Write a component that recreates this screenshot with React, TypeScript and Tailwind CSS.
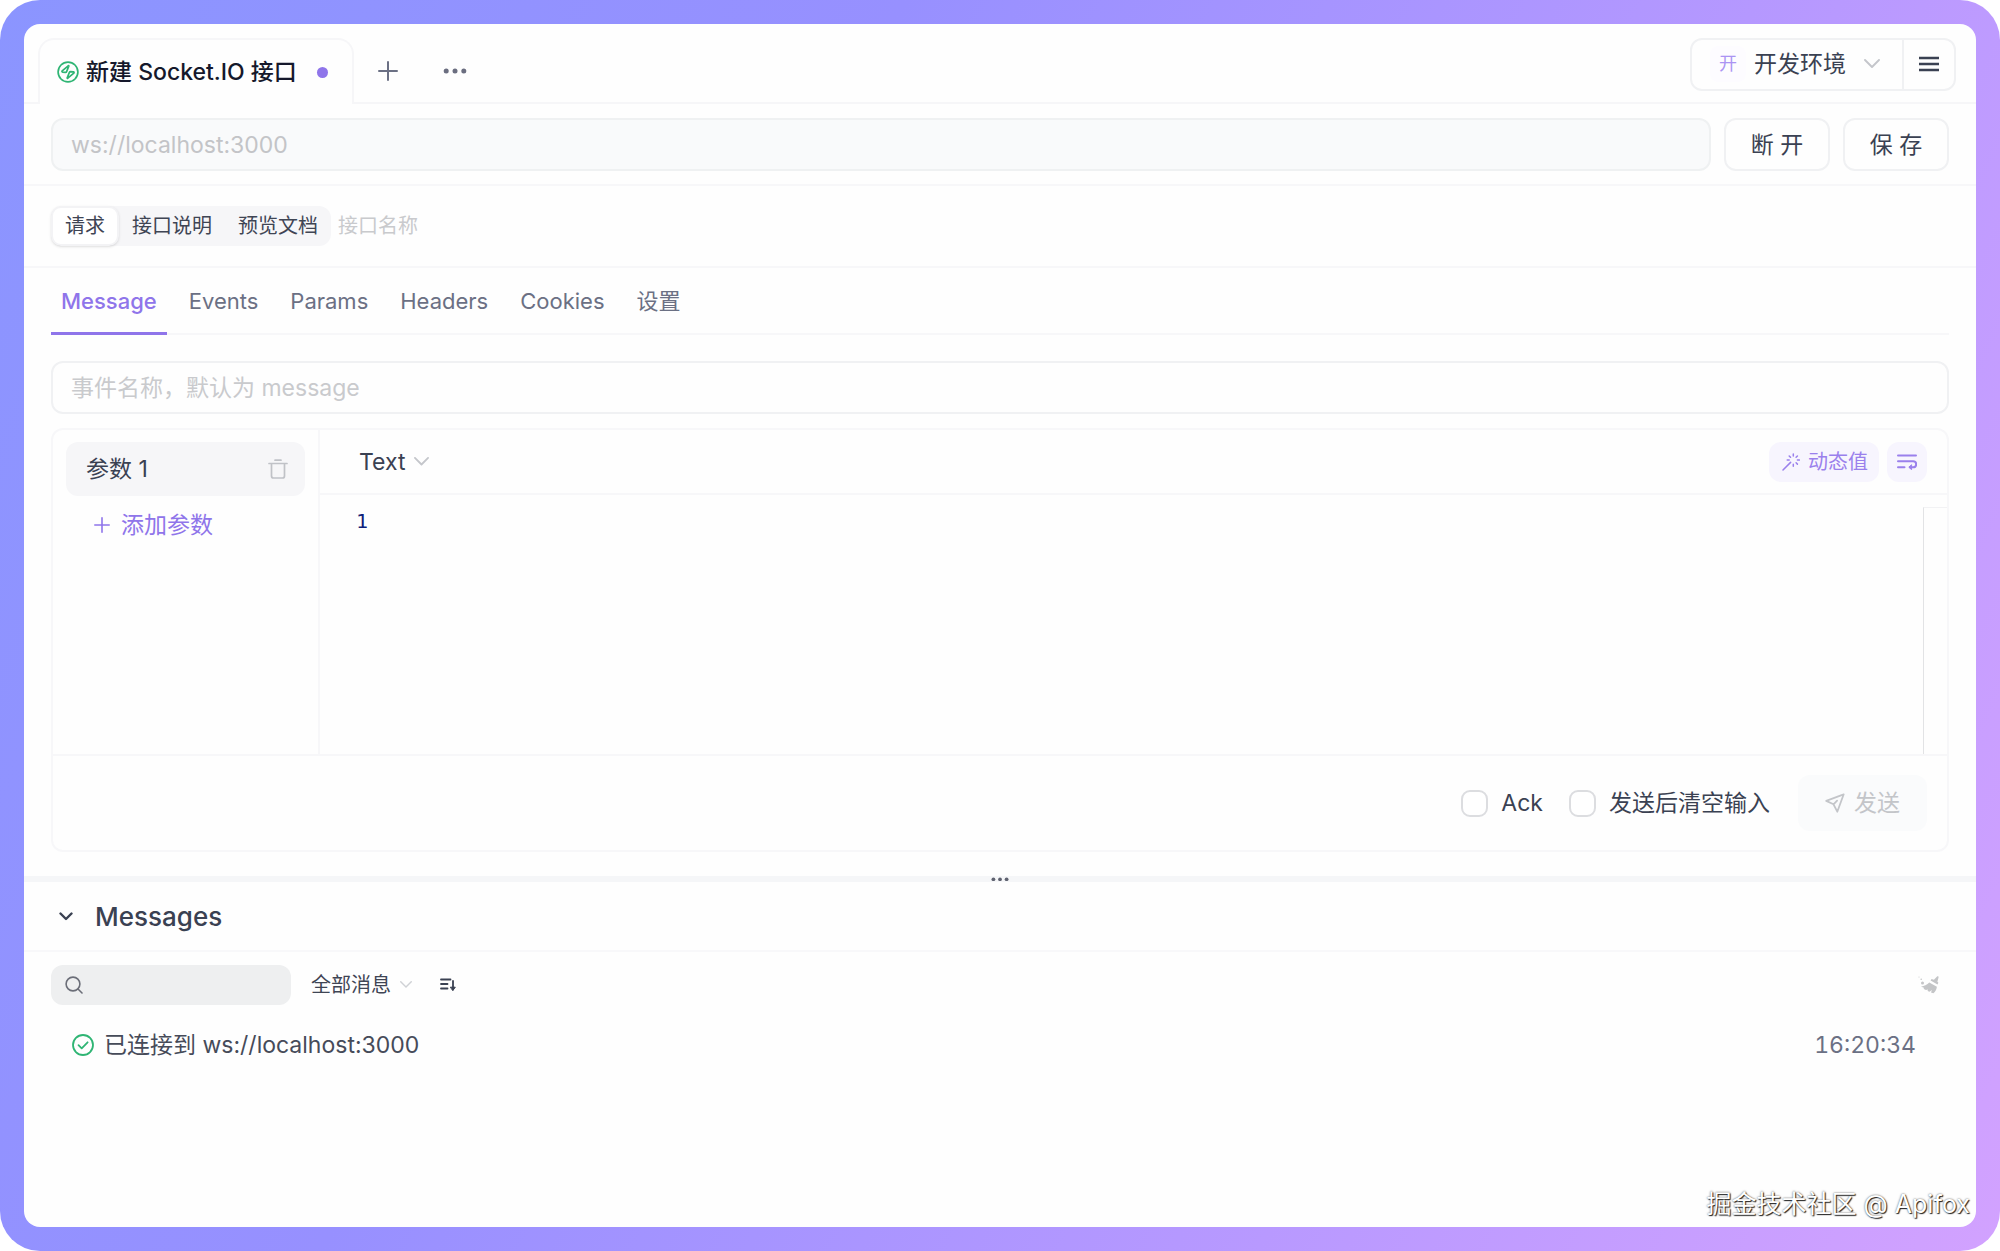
import React from 'react';

type IconProps = { className?: string };

const stroke = {
  fill: 'none',
  stroke: 'currentColor',
  strokeLinecap: 'round' as const,
  strokeLinejoin: 'round' as const,
};

const SocketIcon = ({ className }: IconProps) => (
  <svg viewBox="0 0 22 22" className={className} {...stroke} strokeWidth="1.7">
    <circle cx="11" cy="11" r="9.9" />
    <path d="M11.200 4.800 5.200 9.800c-.5.500-.3 1.200.4 1.300l2.900.2c.5 0 .9-.2 1.100-.7l2.200-5.400c.1-.4-.2-.7-.6-.4Z" />
    <path d="m10.800 17.200 6-5c.5-.5.300-1.200-.4-1.300l-2.900-.2c-.5 0-.9.200-1.100.7l-2.200 5.400c-.1.400.2.700.6.400Z" />
  </svg>
);

const PlusIcon = ({ className }: IconProps) => (
  <svg viewBox="0 0 20 20" className={className} {...stroke} strokeWidth="2">
    <path d="M10 1v18M1 10h18" />
  </svg>
);

const DotsIcon = ({ className }: IconProps) => (
  <svg viewBox="0 0 24 6" className={className} fill="currentColor">
    <circle cx="3.2" cy="3" r="2.5" />
    <circle cx="12" cy="3" r="2.5" />
    <circle cx="20.8" cy="3" r="2.5" />
  </svg>
);

const ChevronIcon = ({ className }: IconProps) => (
  <svg viewBox="0 0 16 10" className={className} {...stroke} strokeWidth="1.9">
    <path d="m1 1 7 7 7-7" />
  </svg>
);

const BoldChevronIcon = ({ className }: IconProps) => (
  <svg viewBox="0 0 14 9" className={className} {...stroke} strokeWidth="2.4">
    <path d="m1.5 1.5 5.5 5.5 5.5-5.5" />
  </svg>
);

const MenuIcon = ({ className }: IconProps) => (
  <svg viewBox="0 0 20 16" className={className} {...stroke} strokeLinecap="butt" strokeWidth="2.4">
    <path d="M0 2h20M0 8h20M0 14h20" />
  </svg>
);

const TrashIcon = ({ className }: IconProps) => (
  <svg viewBox="0 0 20 20" className={className} {...stroke} strokeWidth="1.7">
    <path d="M1 4.500h18M7 1.200h6M3.500 4.500v12.500c0 1.200.8 2 2 2h9c1.200 0 2-.8 2-2V4.500" />
  </svg>
);

const WandIcon = ({ className }: IconProps) => (
  <svg viewBox="0 0 18 18" className={className} {...stroke} strokeWidth="1.5">
    <path d="M1 17 8.600 9.400M11.300 1v2M11.300 11.200v2M5.200 7h2M15.400 7h2M7.200 3l1.300 1.300M15.400 3l-1.300 1.300M15.400 11.100l-1.300-1.300" />
  </svg>
);

const WrapIcon = ({ className }: IconProps) => (
  <svg viewBox="0 0 20 16" className={className} {...stroke} strokeWidth="2">
    <path d="M1 1.500h18M1 7.300h15.200a2.900 2.900 0 0 1 0 5.900H13M1 13.200h6.500" />
    <path d="m14.300 11-2.500 2.200 2.500 2.200Z" fill="currentColor" strokeWidth="1" />
  </svg>
);

const SendIcon = ({ className }: IconProps) => (
  <svg viewBox="0 0 20 20" className={className} {...stroke} strokeWidth="1.800">
    <path d="M18.700 1.300 1.200 7.900l7.300 3.400 3.800 7.400 6.400-17.400ZM8.500 11.300l3.600-3.600" />
  </svg>
);

const SearchIcon = ({ className }: IconProps) => (
  <svg viewBox="0 0 18 18" className={className} {...stroke} strokeWidth="1.600">
    <circle cx="8" cy="8" r="6.900" />
    <path d="m13 13 4 4" />
  </svg>
);

const SortIcon = ({ className }: IconProps) => (
  <svg viewBox="0 0 16 14" className={className} {...stroke} strokeWidth="1.800">
    <path d="M1 1.500h9.500M1 6h6.500M1 10.500h6.500M13 3v8.500" />
    <path d="M10.700 9.200h4.600L13 12.300Z" fill="currentColor" strokeWidth="1" />
  </svg>
);

const CheckCircleIcon = ({ className }: IconProps) => (
  <svg viewBox="0 0 22 22" className={className} {...stroke} strokeWidth="1.800">
    <circle cx="11" cy="11" r="10" />
    <path d="m6.500 11.200 3.200 3.100 5.900-6" />
  </svg>
);

const BroomIcon = ({ className }: IconProps) => (
  <svg viewBox="0 0 22 20" className={className} fill="currentColor">
    <path d="M19.300 1.300c.8-.3 1.400.2 1.300 1l-1.200 4.500 1 1-.9 1.700-6.900-3.900 1-1.500 2.300.6Z" />
    <path d="m11.300 7.600 7.600 4.200c-.3 2.700-1.600 4.900-3.500 6.500l-2.400-.9.900-2.300-2.400 1.600-1.900-.7.300-1.600-2 .7-2-1-.3-1.500-2.600-.9c3.100-.6 6.100-1.800 8.300-4.100Z" />
    <circle cx="4.500" cy="8" r="1.500" />
    <circle cx="3.200" cy="4.300" r=".8" />
    <circle cx="1" cy="2" r=".5" />
  </svg>
);

const tabs = ['Message', 'Events', 'Params', 'Headers', 'Cookies', '设置'];
const segments = ['请求', '接口说明', '预览文档'];

function Header() {
  return (
    <header className="flex h-20 items-stretch">
      <div className="w-[14px] border-b-2 border-[#f6f6f8]" />
      <div className="mt-[14px] flex w-[316px] items-center rounded-t-2xl border-2 border-b-0 border-[#f6f6f8] pl-[17px] pr-6">
        <SocketIcon className="size-[22px] shrink-0 text-[#2fb574]" />
        <span className="ml-[7px] whitespace-nowrap font-medium text-[#15182b]">新建 Socket.IO 接口</span>
        <span className="ml-auto size-[11px] shrink-0 rounded-full bg-[#8f75ea]" />
      </div>
      <div className="flex flex-1 items-center border-b-2 border-[#f6f6f8] pr-5 pt-[2px]">
        <button aria-label="新建标签" className="ml-6 mt-[14px] text-[#6b7084]">
          <PlusIcon className="size-5" />
        </button>
        <button aria-label="更多" className="ml-[45px] mt-[14px] text-[#6b6e80]">
          <DotsIcon className="w-6" />
        </button>
        <div className="ml-auto flex h-[53px] items-stretch rounded-xl border-2 border-[#f0f1f3]">
          <button className="flex items-center pl-[18px] pr-[22px] text-[#3a4152]">
            <span className="flex size-9 items-center justify-center rounded-lg bg-[#fdfcff] text-lg text-[#ab94f3]">开</span>
            <span className="ml-2">开发环境</span>
            <ChevronIcon className="ml-[18px] w-4 text-[#c4c6cb]" />
          </button>
          <button aria-label="菜单" className="flex w-[52px] items-center justify-center border-l-2 border-[#f0f1f3] text-[#3a4152]">
            <MenuIcon className="w-5" />
          </button>
        </div>
      </div>
    </header>
  );
}

function Editor() {
  return (
    <section className="mt-[14px] rounded-xl border-2 border-[#f7f7f9]">
      <div className="flex h-[324px]">
        <div className="w-[267px] border-r-2 border-[#f7f7f9] px-[13px] pt-3">
          <div className="flex h-[54px] items-center rounded-xl bg-[#f6f6f8] px-5 text-[#3a4152]">
            <span>参数 1</span>
            <button aria-label="删除参数" className="ml-auto mr-[-3px] text-[#c0c2c7]">
              <TrashIcon className="size-5" />
            </button>
          </div>
          <button className="mt-3 flex items-center pl-7 text-[#8f75ea]">
            <PlusIcon className="size-4" />
            <span className="ml-[11px]">添加参数</span>
          </button>
        </div>
        <div className="flex flex-1 flex-col">
          <div className="flex h-[65px] items-center border-b-2 border-[#f7f7f9] pl-[39px] pr-5">
            <button className="flex items-center gap-[9px] text-[#3a4152]">
              Text
              <ChevronIcon className="w-[15px] text-[#c4c6cb]" />
            </button>
            <button className="ml-auto flex h-10 items-center rounded-xl bg-[#f7f5fe] px-[11px] text-xl text-[#9a80ec]">
              <WandIcon className="ml-[2px] mr-2 size-[18px]" />
              动态值
            </button>
            <button aria-label="自动换行" className="ml-2 flex size-10 items-center justify-center rounded-xl bg-[#f7f5fe] text-[#9a80ec]">
              <WrapIcon className="w-5" />
            </button>
          </div>
          <div className="flex flex-1 pt-3">
            <div className="pl-9 font-['DejaVu_Sans_Mono',monospace] text-xl text-[#0f1f7a]">1</div>
            <textarea aria-label="消息内容" className="ml-4 flex-1 resize-none bg-transparent text-xl outline-none" />
            <div className="w-6 border-l border-t border-l-[#e2e3e5] border-t-[#f2f2f4]" />
          </div>
        </div>
      </div>
      <div className="flex h-24 items-center justify-end border-t-2 border-[#f7f7f9] pr-5 text-[#3a4152]">
        <label className="flex items-center">
          <input type="checkbox" className="mr-[13px] size-[27px] appearance-none rounded-[9px] border-2 border-[#dcdde0] bg-white" />
          Ack
        </label>
        <label className="ml-[26px] flex items-center">
          <input type="checkbox" className="mr-[13px] size-[27px] appearance-none rounded-[9px] border-2 border-[#dcdde0] bg-white" />
          发送后清空输入
        </label>
        <button className="ml-7 flex h-14 items-center rounded-xl bg-[#fafbfc] px-[27px] text-[#c3c5c9]">
          <SendIcon className="mr-[9px] size-5" />
          发送
        </button>
      </div>
    </section>
  );
}

export default function App() {
  return (
    <div className="flex min-h-screen flex-col rounded-[40px] bg-[linear-gradient(115deg,#8b95ff_0%,#9790ff_35%,#b598ff_68%,#d2a2ff_100%)] p-6 font-[Inter,'Noto_Sans_CJK_SC',sans-serif] text-[23px] leading-[34px]">
      <main className="relative flex flex-1 flex-col overflow-hidden rounded-2xl bg-[#fefefe]">
        <Header />
        <div className="flex gap-[13px] border-b-2 border-[#f7f7f9] px-[27px] pb-[13px] pt-[14px]">
          <input
            aria-label="地址"
            placeholder="ws://localhost:3000"
            className="h-[53px] min-w-0 flex-1 rounded-xl border-2 border-[#eff1f2] bg-[#f9fafb] px-[18px] outline-none placeholder:text-[#c3c4c7]"
          />
          <button className="h-[53px] w-[106px] rounded-xl border-2 border-[#f0f1f3] text-[#3a4152]">断 开</button>
          <button className="h-[53px] w-[106px] rounded-xl border-2 border-[#f0f1f3] text-[#3a4152]">保 存</button>
        </div>
        <div className="flex items-center border-b-2 border-[#f7f7f9] px-[27px] pb-5 pt-5 text-xl text-[#3f4554]">
          <div className="flex h-10 rounded-xl bg-[#f6f6f8]">
            {segments.map((name, i) => (
              <button
                key={name}
                className={
                  i === 0
                    ? 'rounded-[10px] border-2 border-[#f3f3f5] bg-white px-3 shadow-sm'
                    : 'px-[13px]'
                }
              >
                {name}
              </button>
            ))}
          </div>
          <input
            aria-label="接口名称"
            placeholder="接口名称"
            className="ml-[7px] flex-1 bg-transparent outline-none placeholder:text-[#c9cacd]"
          />
        </div>
        <div className="px-[27px]">
          <nav className="flex h-[67px] gap-3 border-b-2 border-[#f7f7f9] text-[22px]">
            {tabs.map((name, i) => (
              <button
                key={name}
                className={
                  i === 0
                    ? 'mb-[-2px] border-b-[3px] border-[#8f75ea] px-[10px] pt-[2px] font-medium text-[#8f75ea]'
                    : 'mb-[-2px] border-b-[3px] border-transparent px-[10px] pt-[2px] text-[#6b7084]'
                }
              >
                {name}
              </button>
            ))}
          </nav>
          <input
            aria-label="事件名称"
            placeholder="事件名称，默认为 message"
            className="mt-[26px] h-[53px] w-full rounded-xl border-2 border-[#f0f1f3] px-[18px] outline-none placeholder:text-[#c9cacd]"
          />
          <Editor />
        </div>
        <div className="mt-6 flex h-[6px] items-center justify-center bg-[#f5f6f8]">
          <DotsIcon className="w-[18px] text-[#5f6270]" />
        </div>
        <section>
          <div className="flex h-[70px] items-center border-b-2 border-[#f8f8fa] pl-[35px]">
            <button aria-label="收起" className="text-[#3a4152]">
              <BoldChevronIcon className="w-[14px]" />
            </button>
            <h2 className="ml-[22px] pt-[2px] text-[26px] font-medium text-[#3a4152]">Messages</h2>
          </div>
          <div className="flex items-center px-[27px] pt-[13px]">
            <div className="flex h-10 w-60 items-center rounded-xl bg-[#eeeff0] px-[14px]">
              <SearchIcon className="size-[18px] text-[#6b6e78]" />
              <input aria-label="搜索消息" className="ml-2 min-w-0 flex-1 bg-transparent text-xl outline-none" />
            </div>
            <button className="ml-5 flex items-center gap-[9px] text-xl text-[#3f4554]">
              全部消息
              <ChevronIcon className="w-3 text-[#cfd1d5]" />
            </button>
            <button aria-label="排序" className="ml-7 text-[#3a4152]">
              <SortIcon className="w-4" />
            </button>
            <button aria-label="清空消息" className="ml-auto mr-[9px] text-[#c4c5c7]">
              <BroomIcon className="w-[22px]" />
            </button>
          </div>
          <div className="mt-[23px] flex items-center pl-12 pr-[60px] text-[#464b59]">
            <CheckCircleIcon className="mr-[10px] size-[22px] text-[#2fb574]" />
            已连接到 ws://localhost:3000
            <time className="ml-auto tabular-nums text-[#6b7084]">16:20:34</time>
          </div>
        </section>
        <div className="absolute bottom-[5px] right-[6px] text-[25px] leading-9 text-white [text-shadow:1px_1px_1px_#222,0_0_2px_#555]">
          掘金技术社区 @ Apifox
        </div>
      </main>
    </div>
  );
}
